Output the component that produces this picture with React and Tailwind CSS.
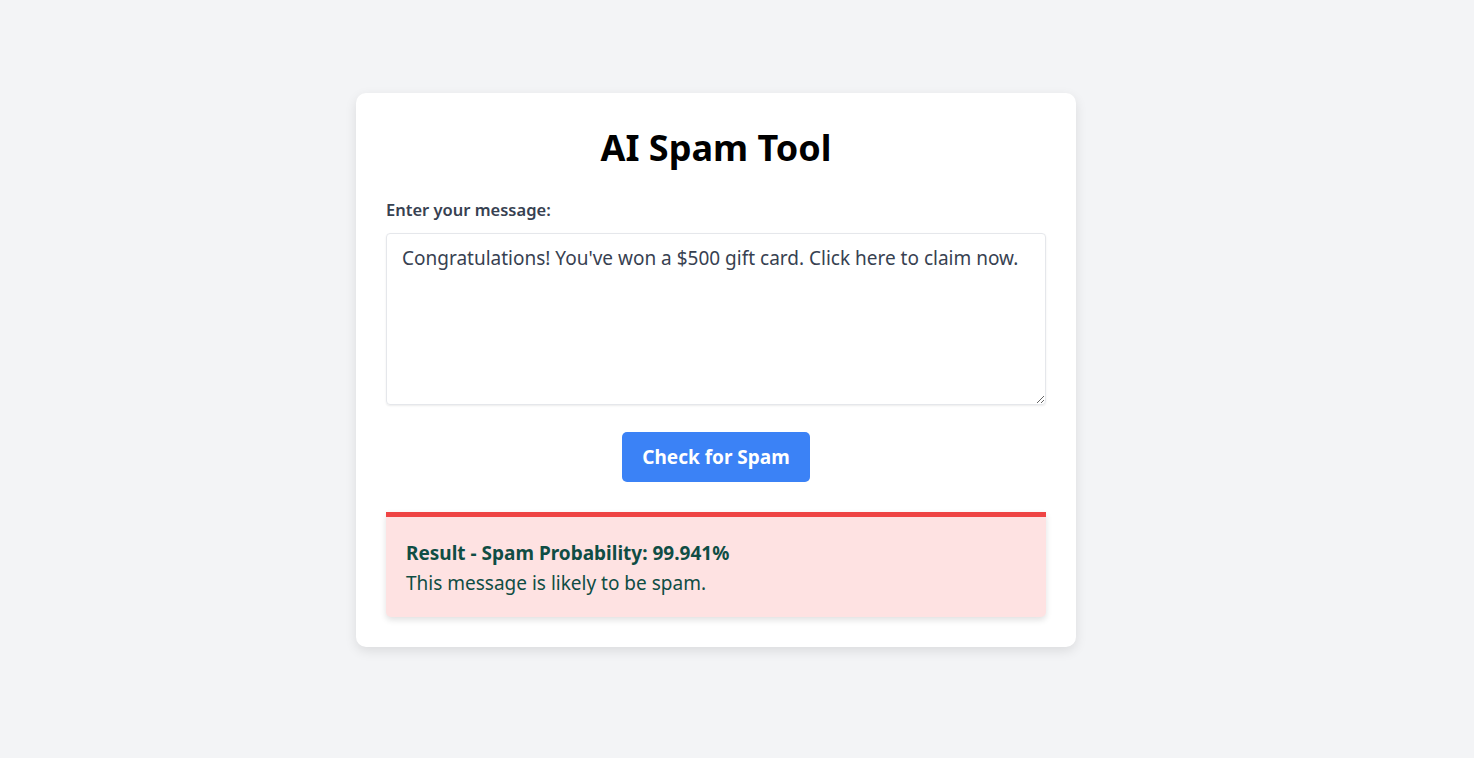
import React, { useState } from "react";

const App = () => {
  const [message, setMessage] = useState(
    "Congratulations! You've won a $500 gift card. Click here to claim now."
  );

  return (
    <div
      className="min-h-screen bg-[#f3f4f6] flex justify-center pt-[93px] pr-[42px]"
      style={{ fontFamily: "'Noto Sans', 'Open Sans', sans-serif" }}
    >
      <div className="w-[720px] h-fit bg-white rounded-[10px] shadow-[0_4px_12px_rgba(0,0,0,0.1)] p-[30px]">
        {/* Title */}
        <h1 className="text-center text-[36px] leading-[40px] font-bold text-black mt-[5px]">
          AI Spam Tool
        </h1>

        {/* Input */}
        <label className="block mt-[32px] mb-[13px] text-[16.5px] leading-[20px] font-semibold text-[#374151]">
          Enter your message:
        </label>
        <textarea
          value={message}
          onChange={(e) => setMessage(e.target.value)}
          className="block w-full h-[172px] border border-[#e5e7eb] rounded-[4px] shadow-[0_1px_2px_rgba(0,0,0,0.08)] px-[15px] py-[11px] text-[19px] leading-[26px] text-[#374151] outline-none resize-y"
        />

        {/* Button */}
        <div className="flex justify-center mt-[27px]">
          <button className="w-[188px] h-[50px] bg-[#3b82f6] text-white text-[19px] font-bold rounded-[5px]">
            Check for Spam
          </button>
        </div>

        {/* Result */}
        <div className="mt-[30px] bg-[#fee2e2] border-t-[5px] border-[#ef4444] rounded-b-[5px] shadow-[0_3px_6px_rgba(0,0,0,0.12)] px-[20px] pt-[23px] pb-[21px] text-[#0f4d44]">
          <p className="text-[19px] leading-[26px] font-bold">
            Result - Spam Probability: 99.941%
          </p>
          <p className="text-[19px] leading-[26px] mt-[4px]">
            This message is likely to be spam.
          </p>
        </div>
      </div>
    </div>
  );
};

export default App;
